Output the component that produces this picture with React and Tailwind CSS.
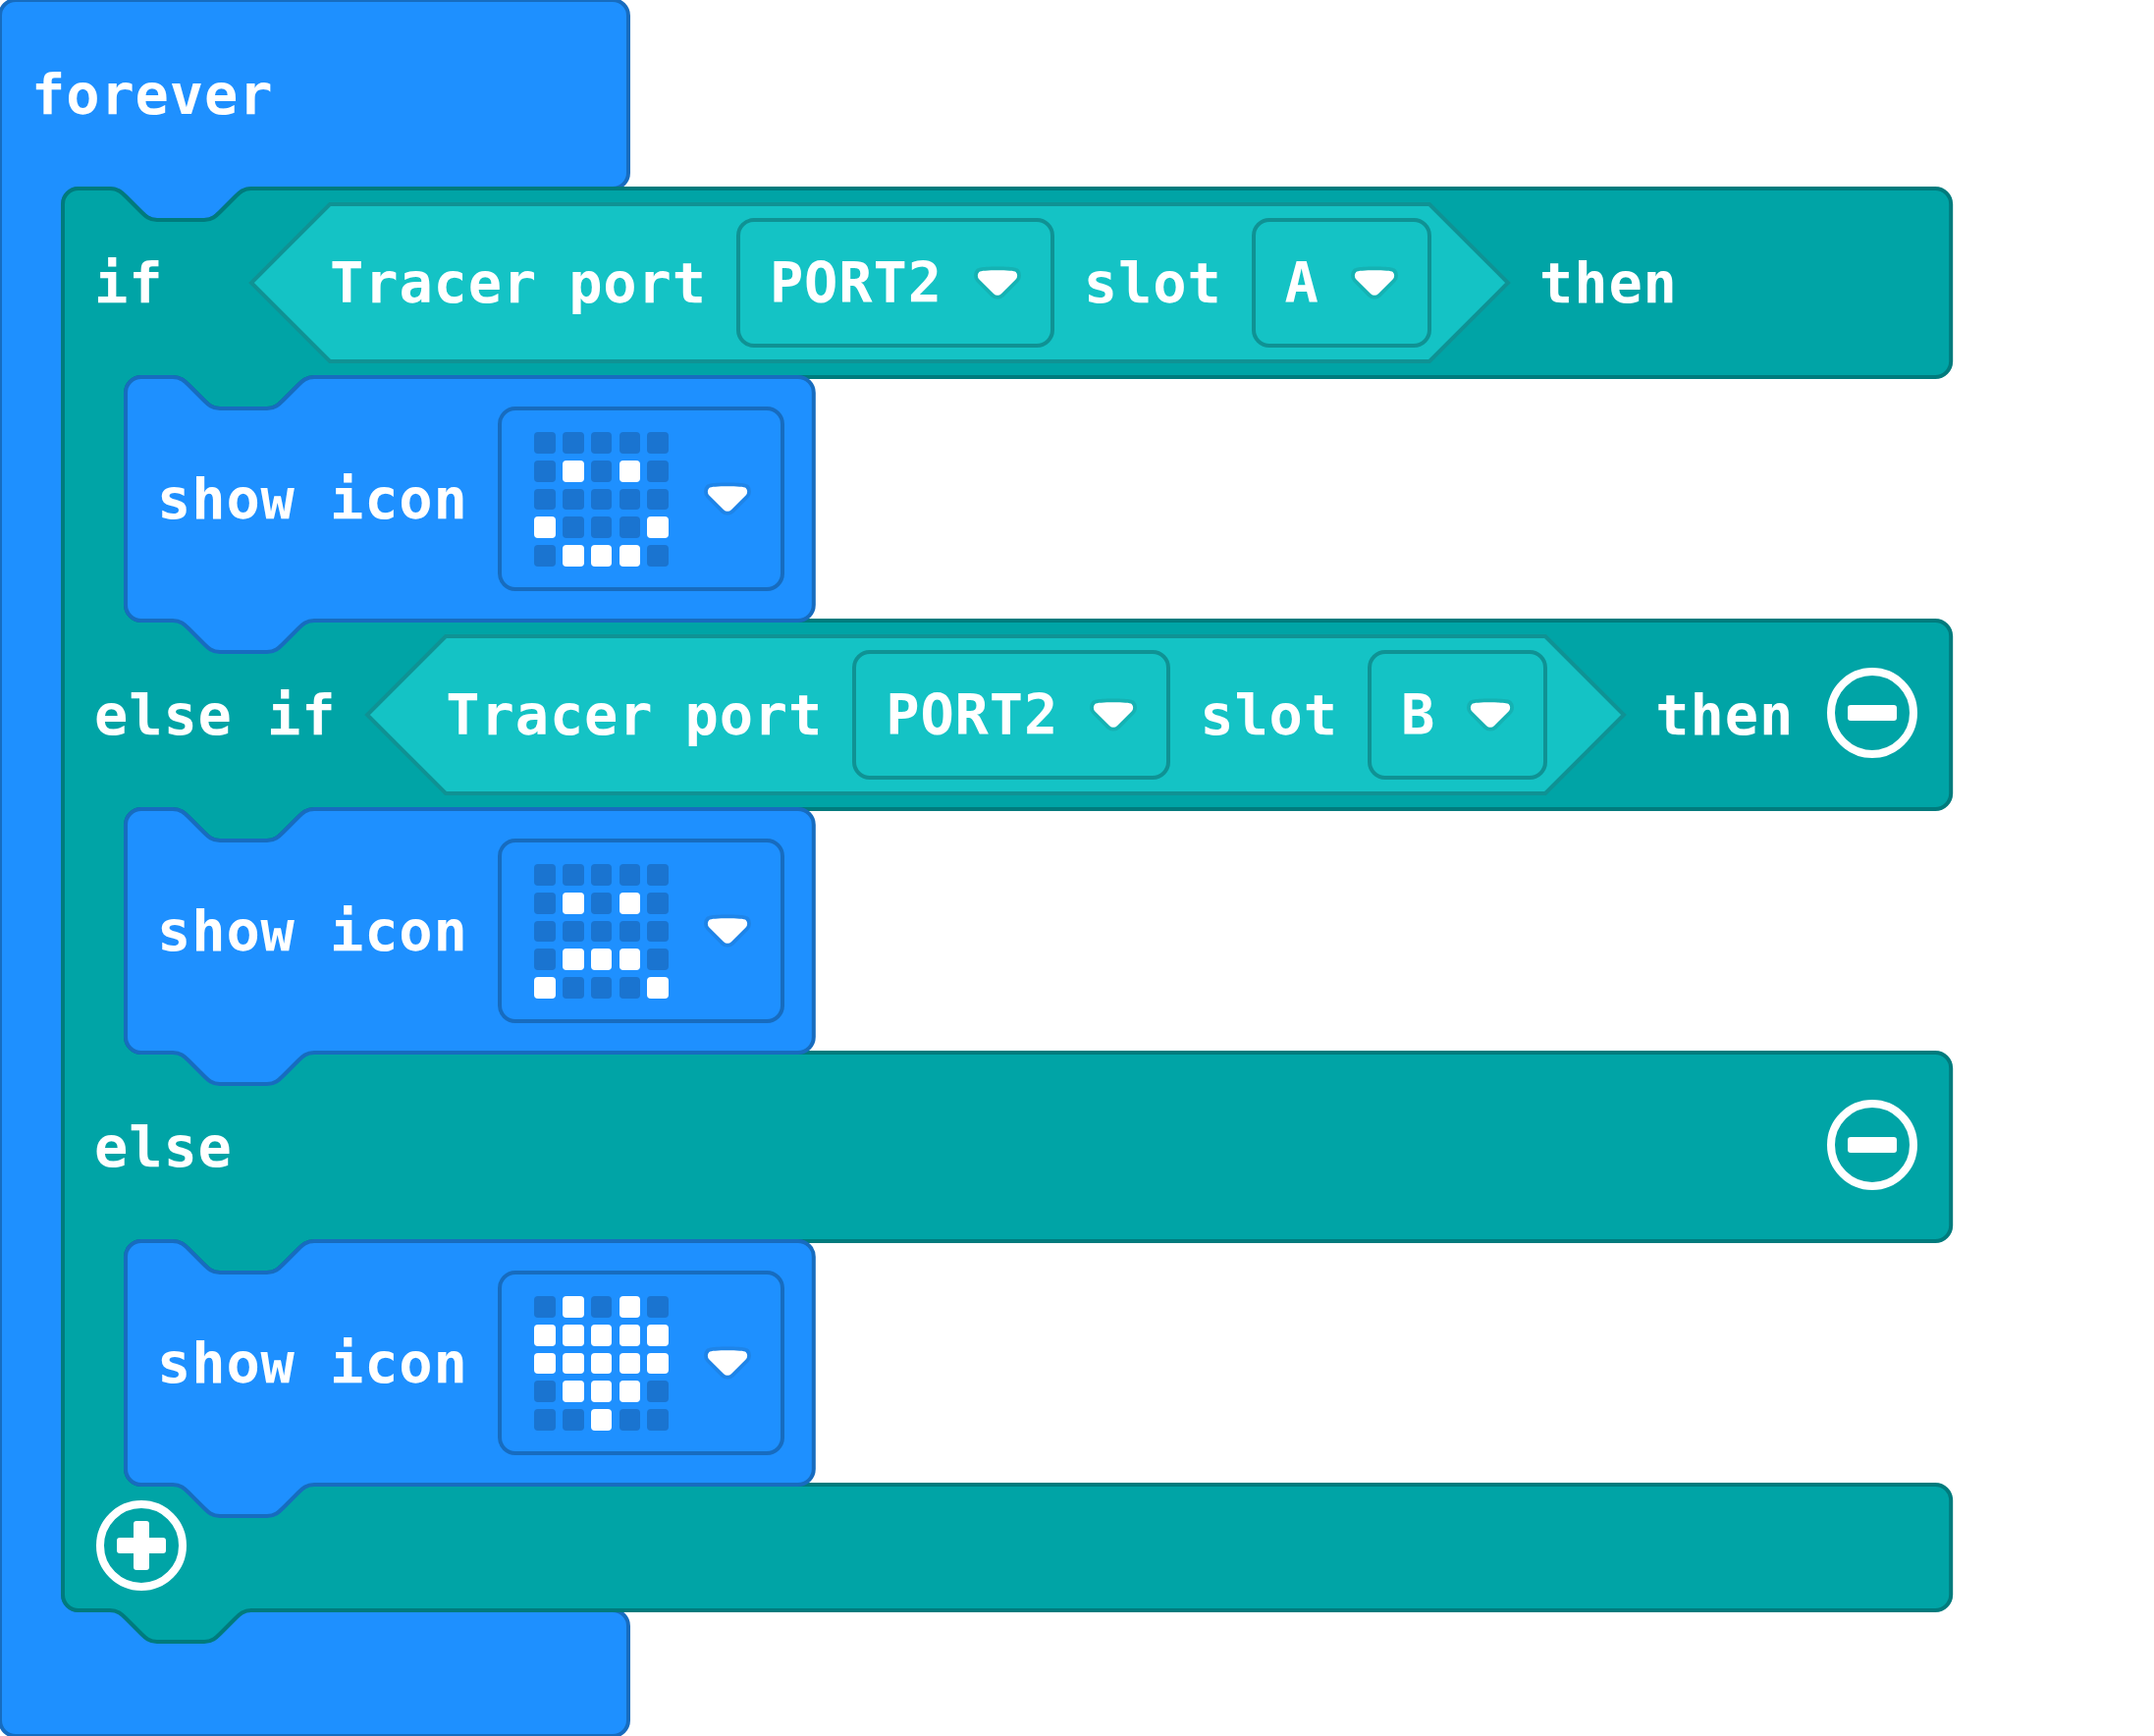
import React from "react";

const NOTCH =
  "c 2 0 3 1 4 2 l 4 4 c 1 1 2 2 4 2 h 12 c 2 0 3 -1 4 -2 l 4 -4 c 1 -1 2 -2 4 -2";
const NOTCH_BACK =
  "c -2 0 -3 1 -4 2 l -4 4 c -1 1 -2 2 -4 2 h -12 c -2 0 -3 -1 -4 -2 l -4 -4 c -1 -1 -2 -2 -4 -2";

// Right-hand edge of one arm, drawn from its top line to its bottom line.
const arm = (width, height) =>
  `H ${width - 4} a 4 4 0 0 1 4 4 v ${height - 8} a 4 4 0 0 1 -4 4`;

// Mouth that holds nested statements, entered from the arm above.
const mouth = (height) =>
  `H 64 ${NOTCH_BACK} h -8 a 4 4 0 0 0 -4 4 v ${height - 8} a 4 4 0 0 0 4 4`;

const FOREVER_PATH = `M 4 0 ${arm(160, 48)} ${mouth(362)} ${arm(160, 32)} H 4 a 4 4 0 0 1 -4 -4 V 4 a 4 4 0 0 1 4 -4 z`;

const IF_PATH = `M 4 0 h 8 ${NOTCH} ${arm(480.8, 48)} ${mouth(62)} ${arm(480.8, 48)} ${mouth(62)} ${arm(480.8, 48)} ${mouth(62)} ${arm(480.8, 32)} H 48 ${NOTCH_BACK} h -8 a 4 4 0 0 1 -4 -4 V 4 a 4 4 0 0 1 4 -4 z`;

const STATEMENT_PATH = `M 4 0 h 8 ${NOTCH} ${arm(175.2, 62)} H 48 ${NOTCH_BACK} h -8 a 4 4 0 0 1 -4 -4 V 4 a 4 4 0 0 1 4 -4 z`;

function Shape({ w, h, d, className }) {
  return (
    <svg
      className={`pointer-events-none absolute top-0 left-0 overflow-visible ${className}`}
      width={w * 4}
      height={h * 4}
      viewBox={`0 0 ${w} ${h}`}
      strokeWidth="1"
      aria-hidden="true"
    >
      <path d={d} />
    </svg>
  );
}

function Label({ children, className = "" }) {
  return <span className={`relative shrink-0 whitespace-pre ${className}`}>{children}</span>;
}

function Arrow() {
  return (
    <svg className="h-12 w-12 shrink-0" viewBox="0 0 12.71 8.79" aria-hidden="true">
      <path
        d="M12.71 2.44A2.41 2.41 0 0 1 12 4.16L8.08 8.08a2.45 2.45 0 0 1-3.45 0L.72 4.16A2.42 2.42 0 0 1 0 2.44 2.48 2.48 0 0 1 .71.71C1 .47 1.43 0 6.36 0S11.75.46 12 .71a2.44 2.44 0 0 1 .71 1.73Z"
        fill="#231f20"
        opacity="0.1"
      />
      <path
        d="M6.36 7.79a1.43 1.43 0 0 1-1-.42L1.42 3.45a1.44 1.44 0 0 1 0-2c.56-.56 9.31-.56 9.87 0a1.44 1.44 0 0 1 0 2L7.37 7.37a1.43 1.43 0 0 1-1.01.42Z"
        fill="#fff"
      />
    </svg>
  );
}

function Dropdown({ value }) {
  return (
    <div className="relative -mx-0.5 flex h-[132px] shrink-0 items-center gap-8 rounded-[18px] border-4 border-[#0f9294] px-[30px]">
      <Label>{value}</Label>
      <Arrow />
    </div>
  );
}

function TracerCondition({ slot }) {
  return (
    <div className="relative flex h-40 w-[1280px] shrink-0 items-center gap-8 px-20">
      <Shape
        w={320}
        h={40}
        d="M 20 0 H 300 L 320 20 L 300 40 H 20 L 0 20 z"
        className="fill-[#14c3c5] stroke-[#0f9294]"
      />
      <Label className="[word-spacing:-3.2px]">Tracer port</Label>
      <Dropdown value="PORT2" />
      <Label>slot</Label>
      <Dropdown value={slot} />
    </div>
  );
}

function RoundButton({ plus = false }) {
  return (
    <svg className="relative -mt-1 h-24 w-24 shrink-0" viewBox="0 0 96 96" aria-hidden="true">
      <circle cx="48" cy="48" r="42" fill="none" stroke="#fff" strokeWidth="8" />
      <rect x="23" y="40" width="50" height="16" rx="3" fill="#fff" />
      {plus && <rect x="40" y="23" width="16" height="50" rx="3" fill="#fff" />}
    </svg>
  );
}

function LedGrid({ rows }) {
  return (
    <div className="mt-px grid grid-cols-[repeat(5,21.7px)] gap-[7.1px]">
      {rows
        .join("")
        .split("")
        .map((c, i) => (
          <div
            key={i}
            className={`h-[21.7px] rounded-[4px] ${c === "#" ? "bg-white" : "bg-[#1a74d0]"}`}
          />
        ))}
    </div>
  );
}

function ShowIcon({ rows }) {
  return (
    <div className="relative ml-16 flex h-[248px] w-[700.8px] items-center gap-8 pl-8">
      <Shape w={175.2} h={62} d={STATEMENT_PATH} className="fill-[#1e90ff] stroke-[#176cbf]" />
      <Label>show icon</Label>
      <div className="relative -mx-0.5 flex h-[188px] w-[292px] shrink-0 items-center justify-between rounded-[18px] border-4 border-[#176cbf] pr-[30px] pl-[33.5px]">
        <LedGrid rows={rows} />
        <Arrow />
      </div>
    </div>
  );
}

const SMILE = [".....", ".#.#.", ".....", "#...#", ".###."];
const SAD = [".....", ".#.#.", ".....", ".###.", "#...#"];
const HEART = [".#.#.", "#####", "#####", ".###.", "..#.."];

function IfBlock() {
  return (
    <div className="relative ml-16 w-[1923.2px]">
      <Shape w={480.8} h={362} d={IF_PATH} className="fill-[#00a4a6] stroke-[#007b7d]" />
      <div className="relative flex h-48 items-center gap-8 px-8">
        <Label className="w-32">if</Label>
        <TracerCondition slot="A" />
        <Label>then</Label>
      </div>
      <ShowIcon rows={SMILE} />
      <div className="relative flex h-48 items-center gap-8 px-8">
        <Label>else if</Label>
        <TracerCondition slot="B" />
        <Label>then</Label>
        <RoundButton />
      </div>
      <ShowIcon rows={SAD} />
      <div className="relative flex h-48 items-center justify-between px-8">
        <Label>else</Label>
        <RoundButton />
      </div>
      <ShowIcon rows={HEART} />
      <div className="relative flex h-32 items-center px-8">
        <RoundButton plus />
      </div>
    </div>
  );
}

export default function App() {
  return (
    <main className="h-[1768px] w-[2194px] overflow-hidden bg-white font-['DejaVu_Sans_Mono',monospace] text-[57px] leading-none font-bold tracking-[0.873px] text-white">
      <div className="relative w-[640px]">
        <Shape w={160} h={442} d={FOREVER_PATH} className="fill-[#1e90ff] stroke-[#176cbf]" />
        <div className="relative flex h-48 items-center pl-8">
          <Label>forever</Label>
        </div>
        <IfBlock />
        <div className="h-32" />
      </div>
    </main>
  );
}
